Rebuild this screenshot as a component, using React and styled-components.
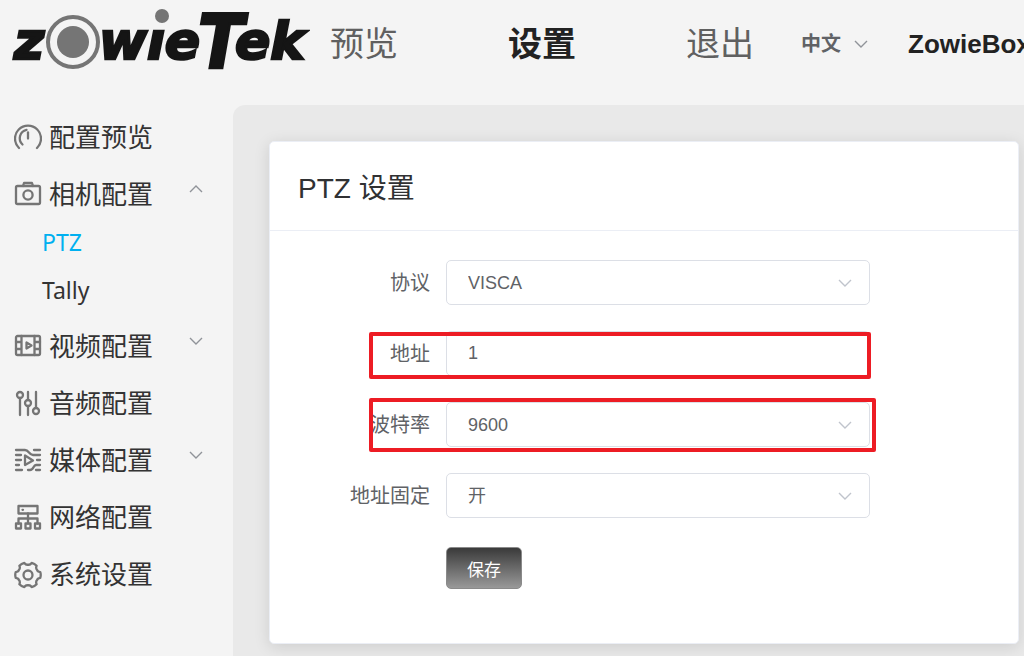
import React, { useState } from "react";
import styled, { createGlobalStyle } from "styled-components";

const GlobalStyle = createGlobalStyle`
  * {
    box-sizing: border-box;
  }

  body {
    margin: 0;
    background: #f4f4f4;
    font-family: "Liberation Sans", "Noto Sans CJK SC", sans-serif;
    color: #303133;
  }

  button,
  input,
  select {
    font-family: inherit;
  }
`;

const Page = styled.div`
  display: flex;
  flex-direction: column;
  min-height: 100vh;
  overflow: hidden;
`;

const Header = styled.header`
  display: flex;
  align-items: center;
  height: 105px;
  padding: 0 0 17px 10px;
  white-space: nowrap;
`;

const LogoSvg = styled.svg`
  flex: none;
  width: 300px;
  height: 88px;
  font-family: "DejaVu Sans", sans-serif;
  font-weight: bold;
  font-style: italic;
  font-size: 52px;
  fill: #151515;

  text {
    stroke: #151515;
    stroke-width: 2.5;
  }
`;

const Nav = styled.nav`
  display: flex;
  gap: 110px;
  margin-left: 20px;
`;

const NavLink = styled.a`
  font-size: 34px;
  line-height: 48px;
  font-weight: ${({ $active }) => ($active ? 700 : 400)};
  color: ${({ $active }) => ($active ? "#222222" : "#606060")};
  text-decoration: none;
`;

const SelectWrap = styled.div`
  position: relative;
  display: flex;
  align-items: center;
`;

const LanguageWrap = styled(SelectWrap)`
  flex: none;
  margin: 0 40px 0 47px;
`;

const LanguageSelect = styled.select`
  appearance: none;
  width: 67px;
  padding: 0;
  border: 0;
  background: transparent;
  font-size: 20px;
  line-height: 32px;
  font-weight: 700;
  color: #606266;
`;

const Arrow = styled.svg`
  flex: none;
  width: ${({ $size }) => $size || 14}px;
  height: 10px;
  fill: none;
  stroke: ${({ $color }) => $color || "#909399"};
  stroke-width: 1.4;
  transform: ${({ $up }) => ($up ? "rotate(180deg)" : "none")};
`;

const SelectArrow = styled(Arrow)`
  position: absolute;
  right: ${({ $right }) => $right || 0}px;
  pointer-events: none;
`;

const Device = styled.strong`
  font-size: 26px;
  line-height: 32px;
  color: #222222;
`;

const Body = styled.div`
  display: flex;
  flex: 1;
`;

const Sidebar = styled.aside`
  flex: none;
  width: 233px;
  padding-top: 4px;
`;

const MenuItem = styled.button`
  display: flex;
  align-items: center;
  gap: 7px;
  width: 100%;
  height: 57px;
  padding: 0 30px 0 14px;
  border: 0;
  background: transparent;
  font-size: 26px;
  line-height: 36px;
  color: #333333;
  cursor: pointer;
`;

const MenuIcon = styled.svg`
  flex: none;
  width: 28px;
  height: 28px;
  fill: none;
  stroke: #757575;
  stroke-width: 2.3;
  stroke-linecap: round;
  stroke-linejoin: round;
`;

const MenuArrow = styled(Arrow)`
  margin: 0 0 12px auto;
`;

const SubMenu = styled.div`
  display: flex;
  flex-direction: column;
  align-items: flex-start;
  gap: 10px;
  padding: 0 0 9px 42px;
`;

const SubLink = styled.a`
  font-family: "Noto Sans", sans-serif;
  font-size: 23px;
  line-height: 38px;
  color: ${({ $active }) => ($active ? "#00b0f0" : "#333333")};
  text-decoration: none;
`;

const Main = styled.main`
  flex: 1;
  min-width: 0;
  padding: 36px 5px 12px 36px;
  border-top-left-radius: 12px;
  background: #e9e9e9;
`;

const Card = styled.section`
  border: 1px solid #ebeef5;
  border-radius: 5px;
  background: #ffffff;
  box-shadow: 0 3px 16px rgba(0, 0, 0, 0.12);
`;

const CardTitle = styled.h2`
  margin: 0;
  padding: 26px 28px 21px;
  border-bottom: 1px solid #ebeef5;
  font-size: 28px;
  line-height: 41px;
  font-weight: 400;
`;

const Form = styled.form`
  display: flex;
  flex-direction: column;
  gap: 26px;
  padding: 29px 28px 54px 0;
`;

const Row = styled.div`
  position: relative;
  display: grid;
  grid-template-columns: 160px minmax(0, 424px);
  column-gap: 16px;
  align-items: center;
`;

const Label = styled.label`
  font-size: 20px;
  line-height: 28px;
  text-align: right;
  color: #606266;
`;

const Input = styled.input`
  width: 100%;
  height: 45px;
  padding: 0 21px;
  border: 1px solid #dcdfe6;
  border-radius: 5px;
  background: #ffffff;
  font-size: 18px;
  color: #606266;
`;

const Select = styled(Input)`
  appearance: none;
`;

// red frame that points out a row
const Frame = styled.span`
  position: absolute;
  top: ${({ $top }) => $top}px;
  bottom: ${({ $bottom }) => $bottom}px;
  left: 99px;
  width: ${({ $width }) => $width}px;
  border: 4px solid #ed1c24;
  border-radius: 2px;
  pointer-events: none;
`;

const Save = styled.button`
  grid-column: 2;
  justify-self: start;
  height: 42px;
  margin-top: 3px;
  padding: 0 20px;
  border: 1px solid #8a8a8a;
  border-radius: 5px;
  background: linear-gradient(#3a3a3a, #999999);
  font-size: 17px;
  color: #ffffff;
  cursor: pointer;
`;

const arrowPath = <path d="M1 2l6 6 6-6" />;

const gearPath = () => {
  const at = (deg, r) => {
    const a = (deg * Math.PI) / 180;
    return `${(14 + r * Math.cos(a)).toFixed(2)} ${(14 + r * Math.sin(a)).toFixed(2)}`;
  };
  let d = `M${at(-13, 12.6)}`;
  for (let deg = 0; deg < 360; deg += 60) {
    d += `Q${at(deg, 13.2)} ${at(deg + 13, 12.6)}`;
    d += `Q${at(deg + 19, 10)} ${at(deg + 30, 10.4)}`;
    d += `Q${at(deg + 41, 10)} ${at(deg + 47, 12.6)}`;
  }
  return d + "Z";
};

const icons = {
  gauge: (
    <>
      <path d="M5 24A13 13 0 1 1 23 24" />
      <path d="M8.5 20.5A8.6 8.6 0 0 1 12.5 5.8" />
      <path d="M14 8.5v6" />
    </>
  ),
  camera: (
    <>
      <rect x="2" y="5" width="24" height="18" rx="1.5" />
      <path d="M9 5l1-3h8l1 3" />
      <circle cx="14" cy="14" r="4.6" />
    </>
  ),
  film: (
    <>
      <rect x="2" y="3" width="24" height="19" rx="1.5" />
      <path d="M7.5 3v19M20.5 3v19M2 9h5.5M2 16h5.5M20.5 9H26M20.5 16H26" />
      <path d="M12.5 9.5v6l5-3z" />
    </>
  ),
  sliders: (
    <>
      <circle cx="6" cy="5" r="3" />
      <circle cx="14" cy="13" r="3" />
      <circle cx="22" cy="21" r="3" />
      <path d="M6 8v17M14 2v8M14 16v9M22 2v16" />
    </>
  ),
  media: (
    <>
      <path d="M2 3h9c4 0 4 5 8 5h7M20 3h6M2 8h5M2 13h5M2 18h3M2 23h6" />
      <path d="M26 13h-3M26 18h-4c-3 0-2 5-6 5h-2M22 23h4" />
      <path d="M11 8.500v9.500l8-4.500z" />
    </>
  ),
  network: (
    <>
      <rect x="4.500" y="2" width="19" height="7.500" />
      <path d="M8.500 5.800h.5M14 9.500v10M4.500 19.500v-5h19v5" />
      <path d="M2 19.500h5v5H2zM11.500 19.500h5v5h-5zM21 19.500h5v5h-5z" />
    </>
  ),
  gear: (
    <>
      <path d={gearPath()} />
      <circle cx="14" cy="14" r="4.500" />
    </>
  ),
};

const menu = [
  { name: "配置预览", icon: "gauge" },
  { name: "相机配置", icon: "camera", children: ["PTZ", "Tally"] },
  { name: "视频配置", icon: "film", more: true },
  { name: "音频配置", icon: "sliders" },
  { name: "媒体配置", icon: "media", more: true },
  { name: "网络配置", icon: "network" },
  { name: "系统设置", icon: "gear" },
];

const Logo = () => (
  <LogoSvg viewBox="0 0 300 88" role="img" aria-label="zowieTek">
    <text x="4" y="59">z</text>
    <circle cx="63" cy="42" r="25" fill="#f4f4f4" stroke="#757575" strokeWidth="4" />
    <circle cx="63" cy="42" r="16" fill="#757575" />
    <text x="89" y="59">wıe</text>
    <circle cx="152" cy="16" r="7" fill="#757575" />
    <text x="188" y="68" fontSize="74" fontFamily="DejaVu Sans Condensed">T</text>
    <text x="225" y="59">ek</text>
  </LogoSvg>
);

const SelectField = ({ id, label, options, frame }) => (
  <Row>
    <Label htmlFor={id}>{label}</Label>
    <SelectWrap>
      <Select as="select" id={id}>
        {options.map((option) => (
          <option key={option}>{option}</option>
        ))}
      </Select>
      <SelectArrow viewBox="0 0 14 10" $size={16} $right={17} $color="#c0c4cc">
        {arrowPath}
      </SelectArrow>
    </SelectWrap>
    {frame}
  </Row>
);

const App = () => {
  const [open, setOpen] = useState(true);
  const [address, setAddress] = useState("1");

  return (
    <Page>
      <GlobalStyle />
      <Header>
        <Logo />
        <Nav>
          <NavLink href="#preview">预览</NavLink>
          <NavLink href="#settings" $active>
            设置
          </NavLink>
          <NavLink href="#logout">退出</NavLink>
        </Nav>
        <LanguageWrap>
          <LanguageSelect aria-label="语言">
            <option>中文</option>
          </LanguageSelect>
          <SelectArrow viewBox="0 0 14 10">{arrowPath}</SelectArrow>
        </LanguageWrap>
        <Device>ZowieBox</Device>
      </Header>

      <Body>
        <Sidebar>
          {menu.map((item) => (
            <React.Fragment key={item.name}>
              <MenuItem
                type="button"
                onClick={item.children ? () => setOpen(!open) : undefined}
              >
                <MenuIcon viewBox="0 0 28 28">{icons[item.icon]}</MenuIcon>
                {item.name}
                {(item.children || item.more) && (
                  <MenuArrow viewBox="0 0 14 10" $up={item.children && open}>
                    {arrowPath}
                  </MenuArrow>
                )}
              </MenuItem>
              {item.children && open && (
                <SubMenu>
                  {item.children.map((child) => (
                    <SubLink key={child} href={`#${child}`} $active={child === "PTZ"}>
                      {child}
                    </SubLink>
                  ))}
                </SubMenu>
              )}
            </React.Fragment>
          ))}
        </Sidebar>

        <Main>
          <Card>
            <CardTitle>PTZ 设置</CardTitle>
            <Form onSubmit={(e) => e.preventDefault()}>
              <SelectField id="protocol" label="协议" options={["VISCA"]} />
              <Row>
                <Label htmlFor="address">地址</Label>
                <Input
                  id="address"
                  value={address}
                  onChange={(e) => setAddress(e.target.value)}
                />
                <Frame $top={1} $bottom={-3} $width={502} />
              </Row>
              <SelectField
                id="baud"
                label="波特率"
                options={["9600"]}
                frame={<Frame $top={-4} $bottom={-5} $width={507} />}
              />
              <SelectField id="fixed" label="地址固定" options={["开"]} />
              <Row>
                <Save type="submit">保存</Save>
              </Row>
            </Form>
          </Card>
        </Main>
      </Body>
    </Page>
  );
};

export default App;
